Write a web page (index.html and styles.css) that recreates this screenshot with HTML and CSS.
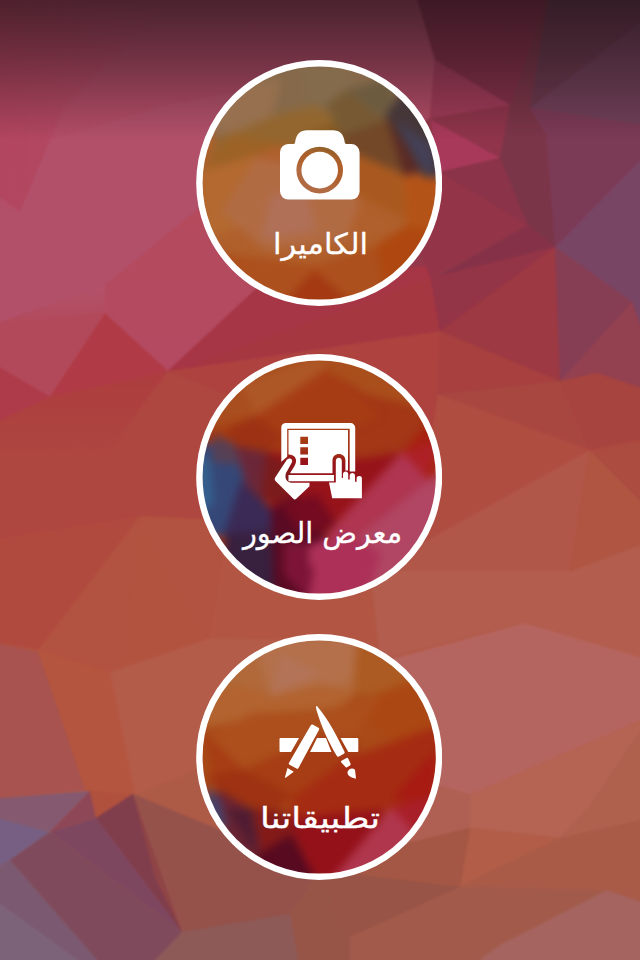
FILE: index.html
```
<!DOCTYPE html>
<html lang="ar" dir="rtl">
<head>
    <meta charset="UTF-8">
    <meta name="viewport" content="width=device-width, initial-scale=1.0">
    <title>الكاميرا</title>
    <link rel="stylesheet" href="styles.css">
</head>
<body>
    <!-- الخلفية -->
    <svg class="background" viewBox="0 0 640 960" preserveAspectRatio="none" aria-hidden="true">
        <defs>
            <linearGradient id="base" x1="0" y1="0" x2="0" y2="1">
                <stop offset="0" stop-color="#aa4a66"/>
                <stop offset=".12" stop-color="#b34c66"/>
                <stop offset=".3" stop-color="#b4526a"/>
                <stop offset=".4" stop-color="#ad3c40"/>
                <stop offset=".6" stop-color="#b2513f"/>
                <stop offset=".8" stop-color="#b25e4b"/>
                <stop offset="1" stop-color="#985950"/>
            </linearGradient>
            <linearGradient id="shade" x1="0" y1="0" x2="0" y2="1">
                <stop offset="0" stop-color="#150c10" stop-opacity=".64"/>
                <stop offset=".4" stop-color="#150c10" stop-opacity=".41"/>
                <stop offset="1" stop-color="#150c10" stop-opacity="0"/>
            </linearGradient>
            <linearGradient id="rose" x1="0" y1="0" x2="0" y2="1">
                <stop offset="0" stop-color="#b44a5c"/>
                <stop offset="1" stop-color="#b34a62"/>
            </linearGradient>
            <linearGradient id="corner" x1="0" y1="0" x2="1" y2="0">
                <stop offset="0" stop-color="#b2455f"/>
                <stop offset="1" stop-color="#b2455f" stop-opacity="0"/>
            </linearGradient>
            <linearGradient id="fade" x1="0" y1="0" x2="0" y2="1">
                <stop offset="0" stop-color="#ad3d3f"/>
                <stop offset="1" stop-color="#ae453f"/>
            </linearGradient>
        </defs>
        <rect width="640" height="960" fill="url(#base)"/>
        <g class="facets">
            <path fill="#93384a" d="M415-9H650V400H440L380 280V150L430 118 435 60z"/>
            <path fill="url(#corner)" d="M-9-9H180L65 105 50 140 20 212 -9 190z"/>
            <path fill="#b2506a" d="M50 140L165 105 300 80V200L105 285 -9 325V205L20 212z"/>
            <path fill="#b2495a" d="M-9 326L105 313 50 397 -9 364z"/>
            <path fill="#b03b46" d="M105 313L168 371 50 397z"/>
            <path fill="url(#rose)" d="M105 285L200 207 260 285 168 371 105 313z"/>
            <path fill="#ae3b49" d="M-9 362L50 397 -9 430z"/>
            <path fill="#a63545" d="M168 371L260 285 430 265 440 331 300 352z"/>
            <path fill="#a53741" d="M190 366L431 277 440 331z"/>
            <path fill="#ad423f" d="M168 371L440 331V393L420 550H230z"/>
            <path fill="url(#fade)" d="M50 397L168 371 110 448 -9 450V425z"/>
            <path fill="#ae4740" d="M-9 449L110 448 168 371 240 400V520L140 516 -9 540z"/>
            <path fill="#b04a3f" d="M-9 540L140 516 38 650 -9 642z"/>
            <path fill="#b25240" d="M38 650L140 516 235 520 225 640 110 672z"/>
            <path fill="#b1533f" d="M140 516L125 620 120 670 210 640 165 568z"/>
            <path fill="#a8534f" d="M-9 642L38 652 87 790 -9 799z"/>
            <path fill="#b4553f" d="M38 650L110 672 135 795H87z"/>
            <path fill="#b35c49" d="M110 672L210 638 320 640V770L200 770 135 795z"/>
            <path fill="#b25643" d="M210 638L230 510 400 560 390 640z"/>
            <path fill="#ad5b47" d="M135 795L195 770 310 850 215 828z"/>
            <path fill="#855970" d="M-9 799L90 791 50 832 -9 816z"/>
            <path fill="#765f83" d="M-9 816L50 832 10 860 -9 872z"/>
            <path fill="#8e4756" d="M90 791L96 818 50 832z"/>
            <path fill="#b0513e" d="M90 791L133 794 96 818z"/>
            <path fill="#8f4348" d="M133 794L182 932 96 818z"/>
            <path fill="#803e4c" d="M133 794L150 850 182 932 96 818z"/>
            <path fill="#8f4446" d="M133 794L182 932 155 878z"/>
            <path fill="#7e4760" d="M96 818L182 932 50 832z"/>
            <path fill="#7f4b5c" d="M50 832L182 932 150 970H106L10 860z"/>
            <path fill="#7b5971" d="M-9 872L10 860 106 970H-9z"/>
            <path fill="#7d6379" d="M-9 897L92 970H-9z"/>
            <path fill="#95524b" d="M133 794L215 828 300 870 320 880 290 915 182 932z"/>
            <path fill="#8d5a58" d="M182 932L290 914 300 970H145z"/>
            <path fill="#975548" d="M290 914L320 870 350 937V970H300z"/>

            <path fill="#85304a" d="M415-9H550L510 105 435 60z"/>
            <path fill="#a03b58" d="M435 60L510 105 430 118z"/>
            <path fill="#8f344b" d="M430 119L510 105 500 158z"/>
            <path fill="#a8395a" d="M430 119L500 158 440 172z"/>
            <path fill="#8a3349" d="M440 172L500 158 528 225z"/>
            <path fill="#933448" d="M440 172L528 225 430 277 400 200z"/>
            <path fill="#853248" d="M528 225L555 247 438 276z"/>
            <path fill="#7b3548" d="M550-9L510 105 500 158 528 225 555 247 546 135 530 108 560-9z"/>
            <path fill="#714059" d="M550-9H650V127L530 108z"/>
            <path fill="#6b394d" d="M550-9H650V15L530 108z"/>
            <path fill="#7b3a56" d="M530 108L650 127V150L555 247 546 135z"/>
            <path fill="#794564" d="M555 247L650 150V350L632 302z"/>
            <path fill="#943447" d="M438 276L555 247 440 331 430 277z"/>
            <path fill="#9d3942" d="M440 331L555 247 560 381z"/>
            <path fill="#863e55" d="M555 247L632 302 560 381z"/>
            <path fill="#934150" d="M632 302L650 355V391L597 373 560 381z"/>
            <path fill="#a7403f" d="M440 331L560 381 438 394z"/>
            <path fill="#a84740" d="M438 394L560 381 590 450z"/>
            <path fill="#a8443f" d="M560 381L597 373 650 391V438L590 450z"/>
            <path fill="#af4d41" d="M438 394L590 450 410 560z"/>
            <path fill="#b15749" d="M590 450L410 550 390 571H570z"/>
            <path fill="#af5541" d="M590 450L650 510V541L570 571z"/>
            <path fill="#ac4b40" d="M590 450L650 438V510z"/>
            <path fill="#b25d4e" d="M370 571H570L650 541V660L525 623 380 660z"/>
            <path fill="#b5655f" d="M380 662L525 623 650 660V716L470 795 420 780z"/>
            <path fill="#b56353" d="M470 795L650 716V818L560 838 470 828z"/>
            <path fill="#b0614e" d="M590 805L650 716V818L560 838z"/>
            <path fill="#af6052" d="M420 780L470 795V828L400 845z"/>
            <path fill="#b15d48" d="M470 828L560 838 460 887z"/>
            <path fill="#a95b48" d="M560 838L650 818V905L607 890 460 887z"/>
            <path fill="#a45744" d="M470 828L400 845 320 875 460 887z"/>
            <path fill="#985446" d="M320 870L460 887 350 937z"/>
            <path fill="#a25b4b" d="M460 887L607 890 480 970H350V937z"/>
            <path fill="#a5645f" d="M607 890L650 905V970H465L500 945z"/>
        </g>
        <rect width="640" height="140" fill="url(#shade)"/>
    </svg>

    <main class="menu">
        <a class="circle camera" href="#">
            <svg viewBox="0 0 246 246">
                <defs>
                    <clipPath id="round"><circle cx="123.2" cy="123" r="118"/></clipPath>
                </defs>
                <g clip-path="url(#round)">
                    <rect width="246" height="246" fill="#b0602c"/>
                    <g class="art">
                        <path fill="#86694a" d="M0 0H246V100L150 90 20 80z"/>
                        <path fill="#96704f" d="M0 20L85 20 75 60 40 75 0 70z"/>
                        <path fill="#836b4c" d="M105 0H155L150 50 110 50z"/>
                        <path fill="#93662f" d="M20 80L80 55 120 45 150 65 150 95 80 85 10 112z"/>
                        <path fill="#9c6226" d="M5 112L35 74 90 84z"/>
                        <path fill="#85591f" d="M105 75L150 60 165 90 150 98z"/>
                        <path fill="#6d5b40" d="M150 30L200 15 195 60 150 75z"/>
                        <path fill="#724828" d="M140 70L192 58 210 115 155 92z"/>
                        <path fill="#775a34" d="M130 45L150 30 190 60 145 76z"/>
                        <path fill="#453638" d="M190 55L210 25 246 60V125L225 115z"/>
                        <path fill="#5b2a24" d="M190 55L226 112 208 116z"/>
                        <path fill="#444056" d="M200 60L236 85 240 118 225 110z"/>
                        <path fill="#b3692f" d="M0 112L60 95 90 150 10 180z"/>
                        <path fill="#b16b43" d="M25 152L60 98 110 105 165 140 150 180 70 190z"/>
                        <path fill="#b07058" d="M65 180L75 135 110 130 120 170z"/>
                        <path fill="#a9591f" d="M150 90L208 116 210 160 160 135z"/>
                        <path fill="#b45318" d="M208 116L246 118V185H212z"/>
                        <path fill="#ae4810" d="M180 185L212 165 246 175V246H170z"/>
                        <path fill="#ac501d" d="M0 190L120 205 180 185 190 246H0z"/>
                        <path fill="#a43912" d="M85 246L118 210 160 246z"/>
                    </g>
                </g>
                <circle class="ring" cx="123.2" cy="123" r="119.8"/>
                <path class="icon" fill-rule="evenodd" d="M92 84h5.500c1.500 0 1.500-1 1.800-3C100.500 74 104.500 70.200 111 70.200h26c6.500 0 10.500 3.800 11.500 10.800.3 2 .5 3 2 3h4.800a8.300 8.300 0 0 1 8.300 8.300v39a8.300 8.300 0 0 1-8.300 8.300H92.300a8.300 8.300 0 0 1-8.300-8.300v-39A8.300 8.300 0 0 1 92 84zM123.700 86.800a23.300 23.300 0 1 0 0 46.600a23.300 23.300 0 1 0 0-46.600z"/>
                <circle class="icon" cx="123.700" cy="110.100" r="18.300"/>
                <text x="124.500" y="194" textLength="95" lengthAdjust="spacingAndGlyphs">الكاميرا</text>
            </svg>
        </a>

        <a class="circle gallery" href="#">
            <svg viewBox="0 0 246 246">
                <g clip-path="url(#round)">
                    <rect width="246" height="246" fill="#a33716"/>
                    <g class="art">
                        <path fill="#a94e1e" d="M0 0H246V60L180 40 130 18 60 62 10 75z"/>
                        <path fill="#ae5726" d="M45 30L130 0 128 20 60 62z"/>
                        <path fill="#a64213" d="M10 75L60 62 90 70 50 85z"/>
                        <path fill="#a63c14" d="M60 62L130 15 185 62 120 90 75 98z"/>
                        <path fill="#a94f1b" d="M130 15L165 10 220 52 170 40z"/>
                        <path fill="#9c3213" d="M30 75L60 62 90 85 70 98 40 90z"/>
                        <path fill="#a7200f" d="M206 98L240 60V130L228 125z"/>
                        <path fill="#ad2026" d="M206 98L246 85 228 128z"/>
                        <path fill="#96131a" d="M70 98L165 105 206 98 150 160 120 180 75 160z"/>
                        <path fill="#6b2738" d="M30 90L70 98V150L45 125z"/>
                        <path fill="#7b1b1c" d="M70 98L95 112 90 150 65 145z"/>
                        <path fill="#354777" d="M0 90L38 90 50 130 40 180 0 185z"/>
                        <path fill="#574054" d="M18 80L38 90 45 110 16 108z"/>
                        <path fill="#34608f" d="M0 100L14 105 18 150 0 160z"/>
                        <path fill="#3b2a56" d="M45 126L75 155 85 220 40 210 28 180z"/>
                        <path fill="#38203f" d="M30 180L85 175 80 246H20z"/>
                        <path fill="#5a0a23" d="M75 155L100 140 130 180 110 246H78z"/>
                        <path fill="#740b20" d="M85 150L120 140 145 175 105 180z"/>
                        <path fill="#af3550" d="M135 175L206 98 246 140V246H120z"/>
                        <path fill="#b04663" d="M160 185L246 115V246H165z"/>
                        <path fill="#ad3058" d="M112 192L150 176 185 200 170 246H110z"/>
                        <path fill="#7d1438" d="M88 188L112 190 108 206 118 215 112 246 88 220z"/>
                    </g>
                </g>
                <circle class="ring" cx="123.2" cy="123" r="119.8"/>
                <g class="icon">
                    <path d="M89.500 69h65a4.700 4.700 0 0 1 4.700 4.700V117.500h-5.500V74.700H91.200v28l-5.900 5V73.700A4.700 4.700 0 0 1 89.500 69z"/>
                    <path fill-rule="evenodd" d="M92.500 76h59.500v40.500h-2.600V106.500c0-4.300-3-6.500-6.500-6.500s-6.400 2.300-6.400 6.500v12.700H94l4.500-7.200c3.500-6 1-11.500-6-11.500zM104.300 82.700v7.300h7.700v-7.300zM104.300 93.200v7.200h7.700v-7.200zM104.300 103.800v7.200h7.700v-7.200z"/>
                    <path d="M92.500 121H138v6.300H92.500z"/>
                    <path d="M93 104.500c2.500-.5 4 2 2.700 4.200L90 119c-1.500 5 0 8.500 5 9.700h18.500v3.500l-13 12.300c-1.200 1.200-2.200 1.200-3.400 0L79.500 127c-1-1.200-1-2.500-.2-3.800L91 105.500z"/>
                    <path d="M133 128.500h6.800V107c0-4.500 6-4.500 6 0v17h1.200v-4c0-3.500 5.200-3.500 5.200 0v5.500h1.500v-3.800c0-3.500 5.300-3.500 5.300 0v6h1.600v-3.500c0-3 5.300-3 5.300 0v20h-29.700z"/>
                </g>
                <text x="126.500" y="189" textLength="159" lengthAdjust="spacingAndGlyphs">معرض الصور</text>
            </svg>
        </a>

        <a class="circle apps" href="#">
            <svg viewBox="0 0 246 246">
                <g clip-path="url(#round)">
                    <rect width="246" height="246" fill="#a94a18"/>
                    <g class="art">
                        <path fill="#b1693a" d="M0 0H170L160 60 125 65 75 70 20 50z"/>
                        <path fill="#b3704a" d="M55 0H165L155 48 125 55 75 62z"/>
                        <path fill="#b37358" d="M75 62L85 20 125 40z"/>
                        <path fill="#b2632f" d="M0 50L40 50 75 62 125 50 160 60 130 85 60 85 0 95z"/>
                        <path fill="#ac5b22" d="M160 10H210L220 50 175 62 158 60z"/>
                        <path fill="#ab4713" d="M175 62L220 45 240 90 200 110 170 85z"/>
                        <path fill="#ac4f1c" d="M10 105L55 80 130 75 185 62 160 100 70 125 48 136z"/>
                        <path fill="#a63d14" d="M5 95L48 136 125 100 165 110 150 145 98 163 20 150z"/>
                        <path fill="#9e3212" d="M10 142L48 136 98 163 75 180 30 165z"/>
                        <path fill="#a52c12" d="M98 163L150 125 246 90V165L190 175 90 185z"/>
                        <path fill="#a71b12" d="M195 165L240 115V172z"/>
                        <path fill="#a91f29" d="M190 175L246 160V220z"/>
                        <path fill="#941119" d="M85 185L190 175 150 246H80z"/>
                        <path fill="#6a2332" d="M20 155L55 175 70 225 30 220z"/>
                        <path fill="#48426a" d="M10 152L24 165 32 195 10 190z"/>
                        <path fill="#501c32" d="M30 175L58 175 60 220z"/>
                        <path fill="#831a18" d="M58 175L90 178 110 225 65 220z"/>
                        <path fill="#570a20" d="M60 222L95 200 120 246H50z"/>
                        <path fill="#b0364d" d="M195 173L220 200 180 246H135z"/>
                    </g>
                </g>
                <circle class="ring" cx="123.2" cy="123" r="119.8"/>
                <g class="icon">
                    <path d="M84.500 104H103L95 118H84.500a1 1 0 0 1-1-1v-12a1 1 0 0 1 1-1zM121 104h9l5.500 14H114zM144.500 104h16.800a1 1 0 0 1 1 1v12a1 1 0 0 1-1 1h-9z"/>
                    <path d="M117 90.700l5.400 3c.8.500 1 1.200.6 2L102.500 134c-.5.900-1.200 1.100-2 .6l-7-3.900c-.8-.5-1-1.200-.5-2l21.800-37.500c.5-.8 1.300-1 2.200-.5z"/>
                    <path d="M91.500 134l6.300 3.700-7.800 5.800c-.8.600-1.300.2-1-.6z"/>
                    <path d="M121.200 72.300c-1.300-.8-1.600 1-.5 4.500 5 17 12.500 32.500 20 45 .5.900 1.300 1.200 2.200.8l5-2.800c.8-.5 1-1.200.5-2.200C141 102 132 85 121.200 72.300z"/>
                    <path d="M145.500 126.700l5-2.700c.7-.4 1.300-.2 1.700.5l2.400 5.300c.2.700 0 1.200-.6 1.600l-3 1.800c-.7.400-1.300.2-1.700-.4l-4.200-4.600c-.5-.6-.3-1.100.4-1.500z"/>
                    <path d="M151.700 137.500c1.500-3.200 5-4 7.300-1.700l1 8.900c-4.500-.8-9.500-3-8.300-7.200z"/>
                </g>
                <text x="124" y="194" textLength="120" lengthAdjust="spacingAndGlyphs">تطبيقاتنا</text>
            </svg>
        </a>
    </main>
</body>
</html>
```
FILE: styles.css
```
* {
    margin: 0;
    padding: 0;
    box-sizing: border-box;
}

body {
    background-color: #b04a45;
    font-family: 'DejaVu Sans', sans-serif;
    color: #fff;
    height: 960px;
    position: relative;
    overflow: hidden;
}

.background {
    position: absolute;
    top: 0;
    left: 0;
    width: 100%;
    height: 100%;
    z-index: -1;
}

.facets {
    filter: blur(1.2px);
}

.menu {
    display: flex;
    flex-direction: column;
    align-items: center;
    padding-top: 60px;
    padding-right: 2px;
}

.circle {
    display: block;
    width: 246px;
    height: 246px;
    color: #fff;
    text-decoration: none;
}

.circle svg {
    display: block;
    width: 246px;
    height: 246px;
}

.gallery {
    margin-top: 48px;
}

.apps {
    margin-top: 34px;
}

.art {
    filter: blur(4px);
}

.ring {
    fill: none;
    stroke: #fff;
    stroke-width: 6.4;
}

.icon {
    fill: #fff;
}

text {
    fill: #fff;
    stroke: #fff;
    stroke-width: 0.3;
    font-size: 29px;
    text-anchor: middle;
}
```
